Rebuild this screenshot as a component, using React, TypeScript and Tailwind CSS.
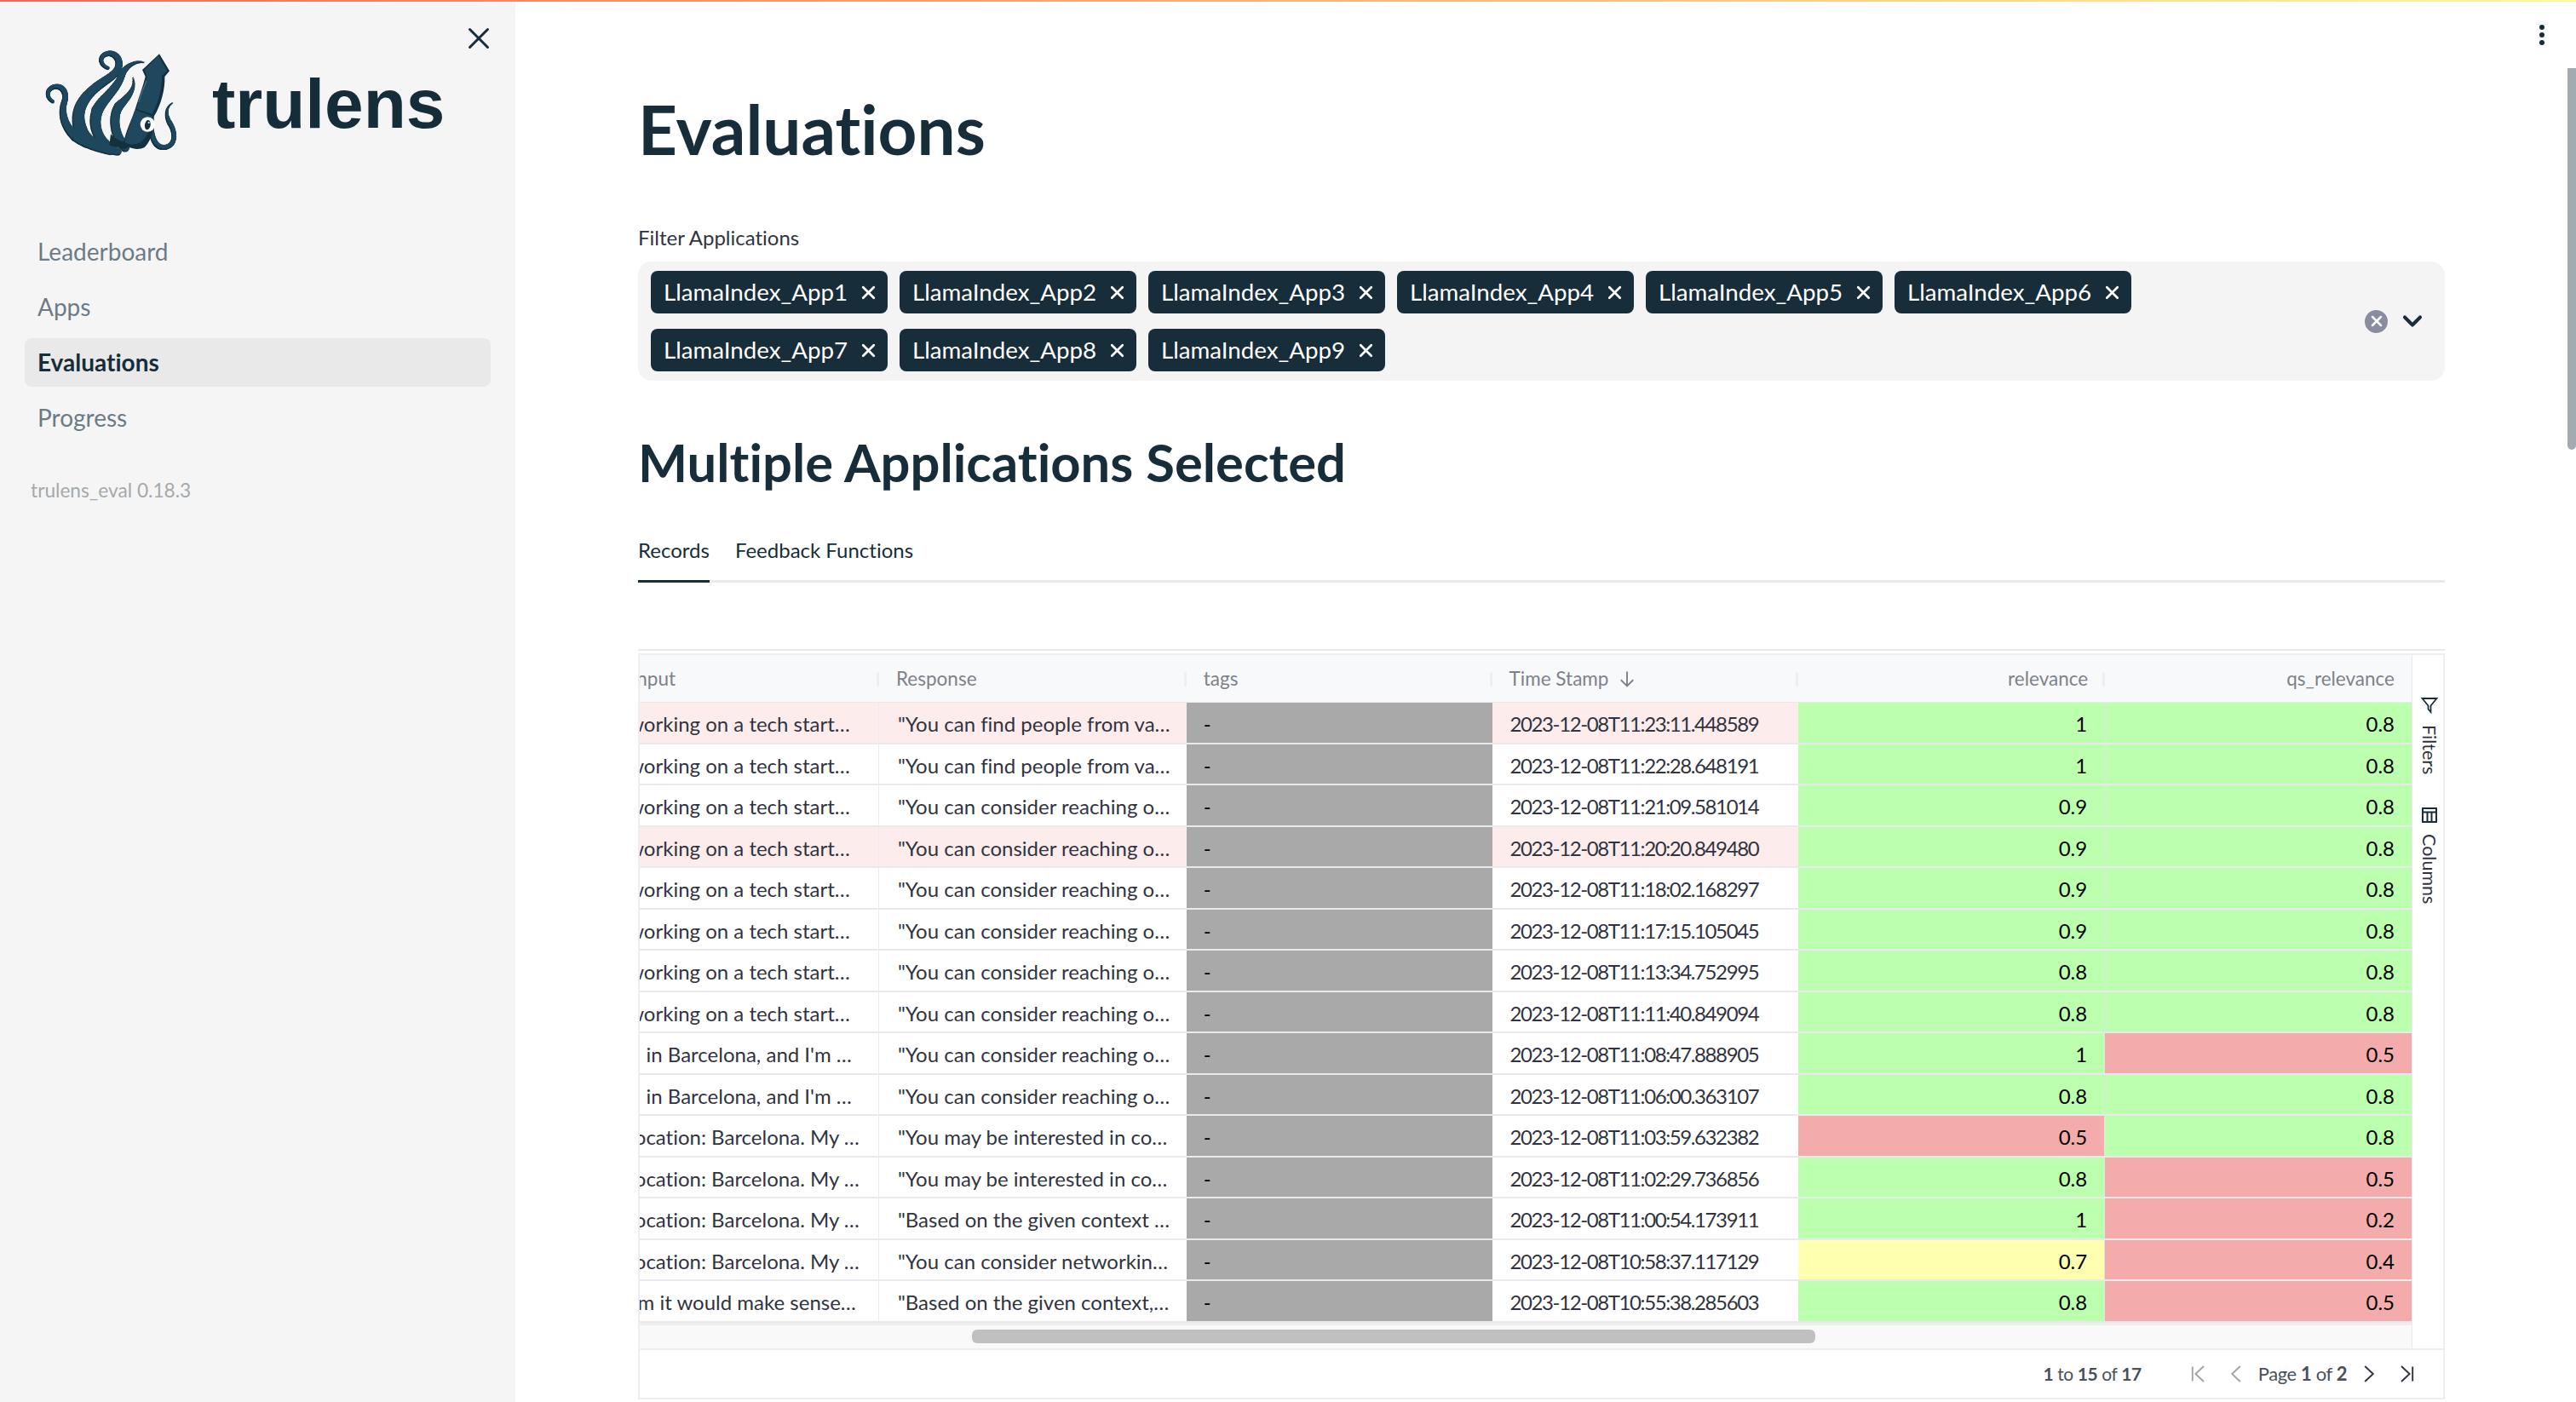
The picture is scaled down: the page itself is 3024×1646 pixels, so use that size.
import { ChevronDown, X } from "lucide-react";

const font = "font-['Lato','Liberation_Sans',sans-serif] [font-variant-ligatures:none]";

const apps = [1, 2, 3, 4, 5, 6, 7, 8, 9];

const GREEN = "bg-[#bbffaf]";
const RED = "bg-[#f4abab]";
const YELLOW = "bg-[#ffffb0]";

const WORK = "working on a tech start…";
const BARC = "in Barcelona, and I'm …";
const LOC = "Location: Barcelona. My …";
const FIND = '"You can find people from va…';
const REACH = '"You can consider reaching o…';
const INT = '"You may be interested in co…';

type Row = {
  input: string;
  pad: string;
  resp: string;
  time: string;
  rel: string;
  relBg: string;
  qs: string;
  qsBg: string;
  pink?: boolean;
};

const rows: Row[] = [
  { input: WORK, pad: "pr-[33px]", resp: FIND, time: "2023-12-08T11:23:11.448589", rel: "1", relBg: GREEN, qs: "0.8", qsBg: GREEN, pink: true },
  { input: WORK, pad: "pr-[33px]", resp: FIND, time: "2023-12-08T11:22:28.648191", rel: "1", relBg: GREEN, qs: "0.8", qsBg: GREEN },
  { input: WORK, pad: "pr-[33px]", resp: REACH, time: "2023-12-08T11:21:09.581014", rel: "0.9", relBg: GREEN, qs: "0.8", qsBg: GREEN },
  { input: WORK, pad: "pr-[33px]", resp: REACH, time: "2023-12-08T11:20:20.849480", rel: "0.9", relBg: GREEN, qs: "0.8", qsBg: GREEN, pink: true },
  { input: WORK, pad: "pr-[33px]", resp: REACH, time: "2023-12-08T11:18:02.168297", rel: "0.9", relBg: GREEN, qs: "0.8", qsBg: GREEN },
  { input: WORK, pad: "pr-[33px]", resp: REACH, time: "2023-12-08T11:17:15.105045", rel: "0.9", relBg: GREEN, qs: "0.8", qsBg: GREEN },
  { input: WORK, pad: "pr-[33px]", resp: REACH, time: "2023-12-08T11:13:34.752995", rel: "0.8", relBg: GREEN, qs: "0.8", qsBg: GREEN },
  { input: WORK, pad: "pr-[33px]", resp: REACH, time: "2023-12-08T11:11:40.849094", rel: "0.8", relBg: GREEN, qs: "0.8", qsBg: GREEN },
  { input: BARC, pad: "pr-[31px]", resp: REACH, time: "2023-12-08T11:08:47.888905", rel: "1", relBg: GREEN, qs: "0.5", qsBg: RED },
  { input: BARC, pad: "pr-[31px]", resp: REACH, time: "2023-12-08T11:06:00.363107", rel: "0.8", relBg: GREEN, qs: "0.8", qsBg: GREEN },
  { input: LOC, pad: "pr-[22px]", resp: INT, time: "2023-12-08T11:03:59.632382", rel: "0.5", relBg: RED, qs: "0.8", qsBg: GREEN },
  { input: LOC, pad: "pr-[22px]", resp: INT, time: "2023-12-08T11:02:29.736856", rel: "0.8", relBg: GREEN, qs: "0.5", qsBg: RED },
  { input: LOC, pad: "pr-[22px]", resp: '"Based on the given context …', time: "2023-12-08T11:00:54.173911", rel: "1", relBg: GREEN, qs: "0.2", qsBg: RED },
  { input: LOC, pad: "pr-[22px]", resp: '"You can consider networkin…', time: "2023-12-08T10:58:37.117129", rel: "0.7", relBg: YELLOW, qs: "0.4", qsBg: RED },
  { input: "m it would make sense…", pad: "pr-[26px]", resp: '"Based on the given context,…', time: "2023-12-08T10:55:38.285603", rel: "0.8", relBg: GREEN, qs: "0.5", qsBg: RED },
];

// tentacles: cubic bezier chain + width at each joint
const arms: { p: number[]; w: number[] }[] = [
  { p: [98, 236, 76, 224, 72, 194, 100, 184, 130, 176, 150, 205, 138, 238, 126, 275, 136, 322, 176, 358, 205, 382, 250, 398, 300, 410], w: [8, 14, 18, 30, 24] },
  { p: [292, 118, 268, 110, 258, 84, 280, 70, 306, 56, 336, 80, 330, 110, 324, 142, 280, 160, 250, 185, 205, 222, 172, 270, 195, 335, 210, 375, 260, 400, 326, 412], w: [8, 14, 22, 30, 44, 24] },
  { p: [418, 97, 385, 92, 352, 110, 338, 148, 322, 192, 275, 225, 255, 265, 235, 320, 255, 375, 310, 406], w: [2, 22, 38, 28] },
  { p: [380, 152, 392, 195, 355, 225, 330, 252, 305, 290, 315, 360, 352, 396], w: [2, 30, 30] },
  { p: [519, 240, 494, 256, 494, 286, 510, 312, 532, 348, 530, 388, 495, 396, 462, 402, 450, 372, 444, 336], w: [2, 14, 14, 16] },
];

function sampleArm(arm: { p: number[]; w: number[] }) {
  const out: { x: number; y: number; r: number }[] = [];
  const segs = (arm.p.length - 2) / 6;
  for (let s = 0; s < segs; s++) {
    const [x0, y0, x1, y1, x2, y2, x3, y3] = arm.p.slice(s * 6, s * 6 + 8);
    for (let i = 0; i <= 24; i++) {
      const t = i / 24;
      const u = 1 - t;
      out.push({
        x: u * u * u * x0 + 3 * u * u * t * x1 + 3 * u * t * t * x2 + t * t * t * x3,
        y: u * u * u * y0 + 3 * u * u * t * y1 + 3 * u * t * t * y2 + t * t * t * y3,
        r: (arm.w[s] + (arm.w[s + 1] - arm.w[s]) * t) / 2,
      });
    }
  }
  return out;
}

function Squid() {
  const body = "#1f485e";
  const dark = "#13303f";
  const dots = arms.flatMap(sampleArm);
  return (
    <svg viewBox="0 0 600 480" className="h-[160px] w-[200px]">
      <g fill={dark}>
        {dots.map((d, i) => (
          <circle key={i} cx={d.x - 2} cy={d.y + 3} r={d.r + 1.5} />
        ))}
      </g>
      <g fill={body}>
        {dots.map((d, i) => (
          <circle key={i} cx={d.x} cy={d.y} r={d.r} />
        ))}
      </g>
      <path d="M300 352 C320 375 350 385 385 382 L350 405 L295 392Z" fill={dark} />
      <path d="M385 268 L452 288 C455 330 445 372 420 398 C395 412 360 402 345 385 C352 345 370 310 385 268Z" fill={dark} />
      <path d="M385 268 L446 284 C445 325 430 360 405 382 C385 392 360 390 350 380 C358 345 372 310 385 268Z" fill={body} />
      <path d="M471 70 L507 130 L490 150 C492 190 478 250 452 290 L385 268 C398 225 412 190 422 150 L411 126Z" fill={dark} />
      <path d="M468 76 L498 130 L480 146 C482 190 468 240 446 282 L390 264 C402 225 416 190 428 150 L419 126Z" fill={body} />
      <path d="M425 165 C416 190 405 215 398 240" stroke="#4d8097" strokeWidth="3" fill="none" />
      <circle cx="430" cy="318" r="26" fill="#ffffff" />
      <ellipse cx="430" cy="320" rx="10" ry="17" fill={dark} transform="rotate(10 430 320)" />
      <circle cx="434" cy="312" r="3" fill="#ffffff" />
    </svg>
  );
}

function Sidebar() {
  return (
    <aside className="flex h-full w-[605px] shrink-0 flex-col bg-[#f5f5f5]">
      <div className="flex justify-end pt-[24px] pr-[22px] text-[#172d3a]">
        <X size={42} strokeWidth={1.7} />
      </div>
      <div className="mt-[-26px] flex items-center">
        <div className="ml-[30px]">
          <Squid />
        </div>
        <span className="mt-[4px] ml-[19px] font-['Liberation_Sans',sans-serif] text-[82px] leading-none font-bold text-[#152c39]">trulens</span>
      </div>
      <nav className="mt-[67px] flex flex-col gap-[8px] px-[29px] text-[28px] text-[#6c7c86]">
        <div className="flex h-[57px] items-center px-[15px] pb-[2px]">Leaderboard</div>
        <div className="flex h-[57px] items-center px-[15px] pb-[2px]">Apps</div>
        <div className="flex h-[57px] items-center rounded-lg bg-[#e9e9e9] px-[15px] pb-[2px] font-bold text-[#172d3a]">Evaluations</div>
        <div className="flex h-[57px] items-center px-[15px] pb-[2px]">Progress</div>
      </nav>
      <div className="mt-[40px] pl-[36px] text-[22.7px] text-[#a4a9ad]">trulens_eval 0.18.3</div>
    </aside>
  );
}

function Chip({ n }: { n: number }) {
  return (
    <div className="flex h-[50px] w-[278px] items-center justify-between rounded-lg bg-[#172d3a] pr-[10px] pl-[15px] text-[27.7px] text-white">
      <span>LlamaIndex_App{n}</span>
      <X size={25} strokeWidth={2.6} />
    </div>
  );
}

function FilterSelect() {
  return (
    <div className="mt-[10px] flex h-[140px] items-center rounded-2xl bg-[#f4f4f4] pl-[15px]">
      <div className="flex w-[1960px] flex-wrap gap-x-[14px] gap-y-[18px]">
        {apps.map((n) => (
          <Chip key={n} n={n} />
        ))}
      </div>
      <div className="ml-auto flex items-center gap-[11px] pr-[20px]">
        <div className="flex h-[27px] w-[27px] items-center justify-center rounded-full bg-[#8a8d9f] text-white">
          <X size={20} strokeWidth={3} />
        </div>
        <ChevronDown size={36} strokeWidth={2.7} className="text-[#172d3a]" />
      </div>
    </div>
  );
}

function HeaderCell({ label, w, right, last }: { label: string; w: string; right?: boolean; last?: boolean }) {
  return (
    <div className={`relative flex h-full items-center px-[20px] ${w} ${right ? "justify-end" : ""}`}>
      <span>{label}</span>
      {label === "Time Stamp" && (
        <svg viewBox="0 0 20 20" className="ml-[10px] h-[24px] w-[24px]" fill="none" stroke="#7d828a" strokeWidth="1.6">
          <path d="M10 3v14M4 11l6 6 6-6" />
        </svg>
      )}
      {!last && <div className="absolute top-[20px] right-0 h-[17px] w-[3px] bg-[#eeeff0]" />}
    </div>
  );
}

function PagerIcon({ d, stroke }: { d: string; stroke: string }) {
  return (
    <svg viewBox="0 0 20 20" className="h-[24px] w-[24px]" fill="none" stroke={stroke} strokeWidth="1.6">
      <path d={d} />
    </svg>
  );
}

function DataGrid() {
  return (
    <div className="mt-[78px] border-t-2 border-[#e6e9ee] pt-[3px]">
      <div className="flex border-t-2 border-r-2 border-l-2 border-[#eeeef0]">
        <div className="w-[2080px] shrink-0 overflow-hidden">
          <div className="flex h-[56px] items-center border-b border-[#e9e9ec] bg-[#f8f9fa] text-[22.5px] text-[#7d828a]">
            <div className="relative flex h-full w-[281px] items-center justify-end pr-[239px]">
              <span>Input</span>
              <div className="absolute top-[20px] right-0 h-[17px] w-[3px] bg-[#eeeff0]" />
            </div>
            <HeaderCell label="Response" w="w-[361px]" />
            <HeaderCell label="tags" w="w-[359px]" />
            <HeaderCell label="Time Stamp" w="w-[360px]" />
            <HeaderCell label="relevance" w="w-[360px]" right />
            <HeaderCell label="qs_relevance" w="w-[360px]" right last />
          </div>
          <div className="text-[24px] text-[#31333f]">
            {rows.map((r) => (
              <div key={r.time} className={`flex h-[48.53px] items-center border-b-2 border-[#e9e9ec] ${r.pink ? "bg-[#fdecec]" : "bg-white"}`}>
                <div className={`flex h-full w-[281px] items-center justify-end overflow-hidden border-r border-[#ecedf0] pt-[4px] whitespace-nowrap ${r.pad}`}>
                  <span className="shrink-0">{r.input}</span>
                </div>
                <div className="flex h-full w-[361px] items-center overflow-hidden pt-[4px] pl-[22px] whitespace-nowrap">{r.resp}</div>
                <div className="flex h-full w-[359px] items-center bg-[#a9a9a9] pt-[4px] pl-[20px] text-black">-</div>
                <div className="flex h-full w-[360px] items-center pt-[4px] pl-[21px] tracking-[-1.4px]">{r.time}</div>
                <div className={`flex h-full w-[360px] items-center justify-end border-r border-[#e4e4e4] pt-[4px] pr-[20px] text-black ${r.relBg}`}>{r.rel}</div>
                <div className={`flex h-full w-[360px] items-center justify-end pt-[4px] pr-[20px] text-black ${r.qsBg}`}>{r.qs}</div>
              </div>
            ))}
          </div>
          <div className="flex h-[30px] items-center border-t-[3px] border-[#eeeeee] bg-[#f9f9f9] pl-[390px]">
            <div className="h-[16px] w-[990px] rounded-[6px] bg-[#c0c0c0]" />
          </div>
        </div>
        <div className="flex flex-1 flex-col items-center border-l border-[#e9e9ec] pt-[49px] pl-[4px] text-[21.5px] text-[#31333f]">
          <svg viewBox="0 0 20 20" className="h-[20px] w-[20px]" fill="none" stroke="#172d3a" strokeWidth="1.8">
            <path d="M1.5 2h17L11.5 10.5V18L8.500 14.500V10.500z" />
          </svg>
          <span className="mt-[13px] [writing-mode:vertical-rl]">Filters</span>
          <svg viewBox="0 0 20 20" className="mt-[38px] h-[20px] w-[20px]" fill="none" stroke="#172d3a" strokeWidth="2">
            <path d="M2 2h16v16H2zM2 6.500h16M7.500 6.500V18M12.500 6.500V18" />
          </svg>
          <span className="mt-[12px] [writing-mode:vertical-rl]">Columns</span>
        </div>
      </div>
      <div className="flex h-[60px] items-center border-2 border-[#eeeef0] text-[22px] text-[#4a4f5a]">
        <div className="ml-auto text-[21px] tracking-[-0.4px]">
          <b>1</b> to <b>15</b> of <b>17</b>
        </div>
        <div className="ml-[55px] flex items-center gap-[20px]">
          <PagerIcon d="M15 2.500 L7 10 15 17.500M4 3v14" stroke="#a0a4aa" />
          <PagerIcon d="M14 2.500 L6 10 14 17.500" stroke="#a0a4aa" />
        </div>
        <div className="mr-[14px] ml-[14px] tracking-[-0.4px]">
          Page <b>1</b> of <b>2</b>
        </div>
        <div className="mr-[31px] flex items-center gap-[20px]">
          <PagerIcon d="M6 2.500 L14 10 6 17.500" stroke="#31333f" />
          <PagerIcon d="M5 2.500 L13 10 5 17.500M16 3v14" stroke="#31333f" />
        </div>
      </div>
    </div>
  );
}

export default function App() {
  return (
    <div className={`relative flex h-[1646px] w-[3024px] overflow-hidden bg-white ${font}`}>
      <div className="absolute top-0 left-0 z-10 h-[2px] w-full bg-gradient-to-r from-[#f4665a] to-[#fff59d]" />
      <Sidebar />
      <main className="flex-1 pl-[144px]">
        <div className="w-[2121px]">
          <h1 className="mt-[104px] text-[80px] leading-[94px] font-bold text-[#172d3a]">Evaluations</h1>
          <div className="mt-[63px] text-[24px] leading-[36px] text-[#31333f]">Filter Applications</div>
          <FilterSelect />
          <h2 className="mt-[55px] text-[61.5px] leading-[80px] font-bold text-[#172d3a]">Multiple Applications Selected</h2>
          <div className="mt-[45px] flex h-[57px] gap-[30px] border-b-[3px] border-[#e9e9eb] text-[24px] leading-[37px] text-[#172d3a]">
            <div className="h-[57px] border-b-[3px] border-[#172d3a]">Records</div>
            <div>Feedback Functions</div>
          </div>
          <DataGrid />
        </div>
      </main>
      <div className="absolute top-[29px] right-[37px] flex flex-col gap-[3px]">
        <div className="h-[6px] w-[6px] rounded-full bg-[#172d3a]" />
        <div className="h-[6px] w-[6px] rounded-full bg-[#172d3a]" />
        <div className="h-[6px] w-[6px] rounded-full bg-[#172d3a]" />
      </div>
      <div className="absolute top-[80px] right-0 h-[448px] w-[10px] rounded-b-md bg-[#a3abb0]" />
    </div>
  );
}
